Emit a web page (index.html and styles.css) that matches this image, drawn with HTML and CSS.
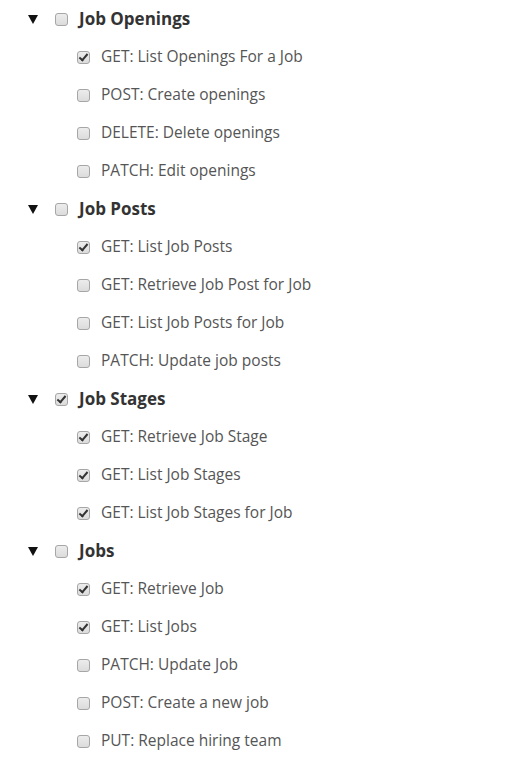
FILE: index.html
```html
<!DOCTYPE html>
<html>
<head>
<meta charset="utf-8">
<link rel="stylesheet" href="styles.css">
</head>
<body>
<ul class="tree">
  <li class="group">
    <div class="row head"><span class="caret"></span><span class="cb"></span><span class="label">Job Openings</span></div>
    <ul class="items">
      <li class="row item"><span class="cb on"></span><span class="label">GET: List Openings For a Job</span></li>
      <li class="row item"><span class="cb"></span><span class="label">POST: Create openings</span></li>
      <li class="row item"><span class="cb"></span><span class="label">DELETE: Delete openings</span></li>
      <li class="row item"><span class="cb"></span><span class="label">PATCH: Edit openings</span></li>
    </ul>
  </li>
  <li class="group">
    <div class="row head"><span class="caret"></span><span class="cb"></span><span class="label">Job Posts</span></div>
    <ul class="items">
      <li class="row item"><span class="cb on"></span><span class="label">GET: List Job Posts</span></li>
      <li class="row item"><span class="cb"></span><span class="label">GET: Retrieve Job Post for Job</span></li>
      <li class="row item"><span class="cb"></span><span class="label">GET: List Job Posts for Job</span></li>
      <li class="row item"><span class="cb"></span><span class="label">PATCH: Update job posts</span></li>
    </ul>
  </li>
  <li class="group">
    <div class="row head"><span class="caret"></span><span class="cb on"></span><span class="label">Job Stages</span></div>
    <ul class="items">
      <li class="row item"><span class="cb on"></span><span class="label">GET: Retrieve Job Stage</span></li>
      <li class="row item"><span class="cb on"></span><span class="label">GET: List Job Stages</span></li>
      <li class="row item"><span class="cb on"></span><span class="label">GET: List Job Stages for Job</span></li>
    </ul>
  </li>
  <li class="group">
    <div class="row head"><span class="caret"></span><span class="cb"></span><span class="label">Jobs</span></div>
    <ul class="items">
      <li class="row item"><span class="cb on"></span><span class="label">GET: Retrieve Job</span></li>
      <li class="row item"><span class="cb on"></span><span class="label">GET: List Jobs</span></li>
      <li class="row item"><span class="cb"></span><span class="label">PATCH: Update Job</span></li>
      <li class="row item"><span class="cb"></span><span class="label">POST: Create a new job</span></li>
      <li class="row item"><span class="cb"></span><span class="label">PUT: Replace hiring team</span></li>
    </ul>
  </li>
</ul>
</body>
</html>
```

FILE: styles.css
```css
html, body {
  margin: 0;
  padding: 0;
  background: #fff;
}
body {
  font-family: "Open Sans", "Liberation Sans", sans-serif;
}
.tree, .items {
  list-style: none;
  margin: 0;
  padding: 0;
}
.row {
  box-sizing: border-box;
  display: flex;
  align-items: center;
  height: 38px;
  padding-bottom: 2px;
}
.head {
  padding-left: 28px;
}
.item {
  padding-left: 77px;
}
.caret {
  width: 0;
  height: 0;
  border-left: 5px solid transparent;
  border-right: 5px solid transparent;
  border-top: 9px solid #111;
  margin-right: 17px;
  margin-top: 2px;
}
.cb {
  box-sizing: border-box;
  width: 13px;
  height: 13px;
  border: 1px solid #a6a6a6;
  border-radius: 3px;
  background: linear-gradient(#ececec, #dcdcdc);
  position: relative;
  flex: none;
  margin-top: 2px;
}
.cb.on::after {
  content: "";
  position: absolute;
  left: 3px;
  top: 0px;
  width: 3px;
  height: 7px;
  border-right: 2px solid #333;
  border-bottom: 2px solid #333;
  transform: rotate(40deg);
}
.head .label {
  margin-left: 11px;
  font-size: 17px;
  font-weight: 700;
  color: #333;
}
.item .label {
  margin-left: 11px;
  font-size: 15.5px;
  color: #555;
}
```
